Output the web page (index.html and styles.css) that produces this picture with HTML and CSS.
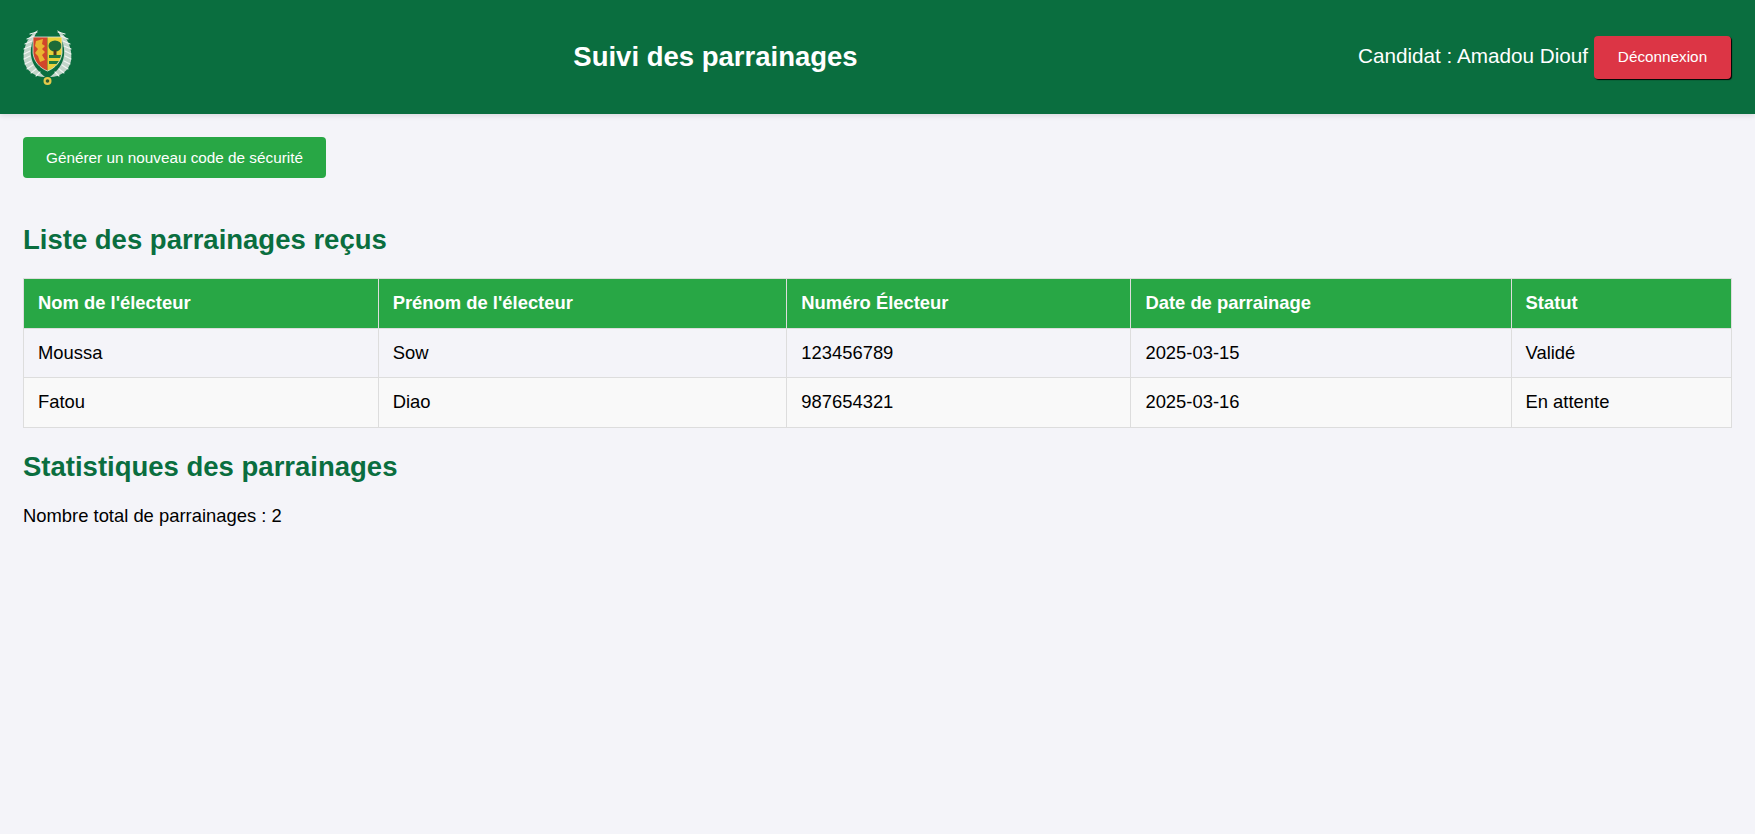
FILE: index.html
```html
<!DOCTYPE html>
<html lang="fr">
<head>
    <meta charset="utf-8">
    <title>Suivi des parrainages</title>
    <link rel="stylesheet" href="styles.css">
</head>
<body>
    <header class="top">
        <svg class="logo" viewBox="0 0 50 56" aria-label="Armoiries">
            <!-- palms -->
            <path d="M15 1 C5 6 -1 20 1 32 C3 42 12 48 22 48 C15 42 9 36 8 26 C7 18 10 9 15 1 Z" fill="#c3d5ca"/>
            <path d="M34 1 C44 6 50 20 48 32 C46 42 37 48 27 48 C34 42 40 36 41 26 C42 18 39 9 34 1 Z" fill="#c3d5ca"/>
            <g fill="none" stroke="#f1f5f2" stroke-width="1.1" stroke-linecap="round">
                <path d="M14 3 L7 5 M11 7 L4 10 M9 12 L2 15 M8 17 L1 20 M7 22 L1 25 M7 27 L1 30 M8 32 L2 35 M10 36 L4 40 M13 40 L8 44 M17 43 L13 47"/>
                <path d="M35 3 L42 5 M38 7 L45 10 M40 12 L47 15 M41 17 L48 20 M42 22 L48 25 M42 27 L48 30 M41 32 L47 35 M39 36 L45 40 M36 40 L41 44 M32 43 L36 47"/>
            </g>
            <!-- shield -->
            <path d="M10 8 H24.5 V42 C17 39 11 33 10 24 Z" fill="#d2452a"/>
            <path d="M24.5 8 H39 V24 C38 33 32 39 24.5 42 Z" fill="#e8d23a"/>
            <path d="M13 12 L20 10 L19 15 L22 17 L19 20 L22 23 L19 26 L22 31 L17 33 L15 27 L12 24 L15 20 L12 17 Z" fill="#e9b431"/>
            <ellipse cx="32" cy="17" rx="6.5" ry="5.5" fill="#1c6b38"/>
            <rect x="30.5" y="21" width="3" height="6" fill="#4c3a1e"/>
            <path d="M26 26 H38 L37.5 29 H26 Z M26 32 H36 L33.5 35 H26 Z" fill="#1f7a40"/>
            <path d="M10 8 H39 V24 C38 33 32 39 24.5 42 C17 39 11 33 10 24 Z" fill="none" stroke="#dfe8e2" stroke-width="0.8"/>
            <!-- medal -->
            <circle cx="24.5" cy="52" r="4" fill="#e4c94a"/>
            <circle cx="24.5" cy="52" r="1.8" fill="#2f5a33"/>
        </svg>
        <h1 class="title">Suivi des parrainages</h1>
        <div class="user">
            <span class="user-name">Candidat : Amadou Diouf</span>
            <button class="btn btn-logout">Déconnexion</button>
        </div>
    </header>

    <main class="content">
        <button class="btn btn-code">Générer un nouveau code de sécurité</button>

        <h2 class="section-title first">Liste des parrainages reçus</h2>
        <table class="list">
            <thead>
                <tr>
                    <th>Nom de l'électeur</th>
                    <th>Prénom de l'électeur</th>
                    <th>Numéro Électeur</th>
                    <th>Date de parrainage</th>
                    <th>Statut</th>
                </tr>
            </thead>
            <tbody>
                <tr>
                    <td>Moussa</td>
                    <td>Sow</td>
                    <td>123456789</td>
                    <td>2025-03-15</td>
                    <td>Validé</td>
                </tr>
                <tr>
                    <td>Fatou</td>
                    <td>Diao</td>
                    <td>987654321</td>
                    <td>2025-03-16</td>
                    <td>En attente</td>
                </tr>
            </tbody>
        </table>

        <h2 class="section-title">Statistiques des parrainages</h2>
        <p class="total">Nombre total de parrainages : 2</p>
    </main>
</body>
</html>
```

FILE: styles.css
```css
* {
    box-sizing: border-box;
}
body {
    margin: 0;
    background: #f4f4f9;
    color: #000000;
    font-family: "Liberation Sans", Arial, sans-serif;
    font-size: 18.4px;
}
.top {
    display: flex;
    align-items: center;
    justify-content: space-between;
    height: 114px;
    padding: 0 8px 0 23px;
    background: #0a6e3f;
    color: #ffffff;
    box-shadow: 0 2px 5px rgba(0, 0, 0, 0.1);
}
.logo {
    width: 50px;
    height: 56px;
}
.title {
    margin: 0;
    font-size: 27.5px;
}
.user {
    display: flex;
    align-items: center;
    gap: 6px;
    padding-right: 16px;
    font-size: 20.7px;
}
.user-name {
    padding-bottom: 2px;
}
.btn {
    border: none;
    border-radius: 4px;
    color: #ffffff;
    font-family: inherit;
    font-size: 15.3px;
}
.btn-logout {
    width: 137px;
    height: 43px;
    background: #dc3545;
    box-shadow: 1px 1px 1px #000000;
}
.btn-code {
    display: block;
    width: 303px;
    height: 41px;
    background: #28a745;
}
.content {
    padding: 23px 7px 0 23px;
}
.section-title {
    margin: 0;
    color: #0a6e3f;
    font-size: 27.5px;
}
.section-title.first {
    margin-top: 46px;
}
.list {
    width: 1709px;
    margin: 22px 0 23px;
    border-collapse: collapse;
    line-height: 20.5px;
}
.list th,
.list td {
    padding: 14px;
    border: 1px solid #dddddd;
    text-align: left;
}
.list th {
    background: #28a745;
    color: #ffffff;
}
.list tbody tr:nth-child(even) {
    background: #f9f9f9;
}
.total {
    margin: 22px 0 0;
}
```
